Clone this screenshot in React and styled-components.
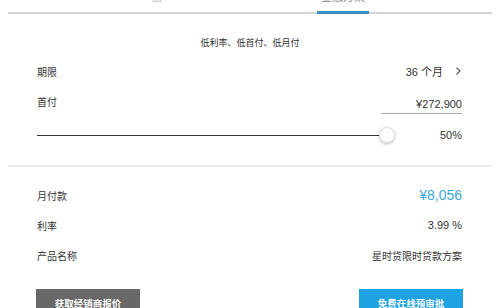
import React from "react";
import styled, { createGlobalStyle } from "styled-components";

const GlobalStyle = createGlobalStyle`
  html, body { margin: 0; padding: 0; background: #fff; }
  body {
    font-family: "Liberation Sans", "Noto Sans CJK SC", sans-serif;
    color: #333;
    -webkit-font-smoothing: antialiased;
  }
`;

const Page = styled.div`
  width: 500px;
  height: 308px;
  overflow: hidden;
  background: #fff;
`;

const TabBar = styled.div`
  margin: 0 8px;
  height: 12px;
  border-bottom: 2px solid #d4d4d4;
  display: flex;
  align-items: flex-end;
  padding-left: 123px;
  gap: 134px;
`;

const Tab = styled.div`
  width: 52px;
  text-align: center;
  font-size: 11px;
  line-height: 12px;
  padding-bottom: 8px;
  color: ${(p) => (p.$active ? "#888" : "#bbb")};
  border-bottom: 3px solid ${(p) => (p.$active ? "#3a8fc4" : "transparent")};
  margin-bottom: -2px;
`;

const Intro = styled.div`
  text-align: center;
  font-size: 9px;
  line-height: 12px;
  padding: 23px 0 7px;
  color: #333;
`;

const Section = styled.div`
  padding: 0 38px 0 37px;
`;

const Row = styled.div`
  display: flex;
  justify-content: space-between;
  align-items: center;
  height: ${(p) => p.$h || 30}px;
`;

const Label = styled.span`
  font-size: 10px;
  color: #333;
`;

const Value = styled.span`
  font-size: ${(p) => p.$size || 11}px;
  color: ${(p) => p.$color || "#333"};
  display: flex;
  align-items: center;
`;

const Chevron = styled.svg`
  margin-left: 12px;
  width: 7px;
  height: 10px;
`;

const DownPayment = styled.div`
  width: 81px;
  text-align: right;
  font-size: 11px;
  line-height: 13px;
  padding: 10px 0 2px;
  border-bottom: 1px solid #aaa;
  color: #333;
`;

const Slider = styled.div`
  flex: 1;
  display: flex;
  align-items: center;
`;

const Track = styled.div`
  flex: 1;
  height: 1px;
  background: #333;
`;

const Thumb = styled.div`
  width: 14px;
  height: 14px;
  border-radius: 50%;
  background: #fff;
  border: 1px solid #e2e2e2;
  box-shadow: 0 1px 3px rgba(0, 0, 0, 0.25);
  margin-left: -5px;
`;

const Percent = styled.span`
  width: 67px;
  text-align: right;
  font-size: 11px;
  color: #333;
`;

const Divider = styled.div`
  margin: 11px 8px 0;
  border-top: 2px solid #ececec;
`;

const Results = styled(Section)`
  padding-top: 13px;
`;

const Actions = styled.div`
  display: flex;
  justify-content: space-between;
  padding: 19px 37px 0 36px;
`;

const Button = styled.button`
  width: 104px;
  height: 28px;
  border: none;
  border-radius: 0;
  background: ${(p) => (p.$primary ? "#1ea2e2" : "#686868")};
  color: #fff;
  font-family: "Noto Sans CJK SC", sans-serif;
  font-size: 9.5px;
  font-weight: 700;
  padding: 0;
  cursor: pointer;
`;

export default function App() {
  return (
    <Page>
      <GlobalStyle />
      <TabBar>
        <Tab>月供计算器</Tab>
        <Tab $active>金融方案</Tab>
      </TabBar>
      <Intro>低利率、低首付、低月付</Intro>
      <Section>
        <Row>
          <Label>期限</Label>
          <Value>
            36 个月
            <Chevron viewBox="0 0 7 10">
              <polyline points="1.5,1.5 5,5 1.5,8.5" fill="none" stroke="#555" strokeWidth="1.1" />
            </Chevron>
          </Value>
        </Row>
        <Row>
          <Label>首付</Label>
          <DownPayment>¥272,900</DownPayment>
        </Row>
        <Row $h={38}>
          <Slider>
            <Track />
            <Thumb />
          </Slider>
          <Percent>50%</Percent>
        </Row>
      </Section>
      <Divider />
      <Results>
        <Row>
          <Label>月付款</Label>
          <Value $size={14} $color="#3ba7da">¥8,056</Value>
        </Row>
        <Row>
          <Label>利率</Label>
          <Value>3.99 %</Value>
        </Row>
        <Row>
          <Label>产品名称</Label>
          <Value $size={10}>星时贷限时贷款方案</Value>
        </Row>
      </Results>
      <Actions>
        <Button>获取经销商报价</Button>
        <Button $primary>免费在线预审批</Button>
      </Actions>
    </Page>
  );
}
